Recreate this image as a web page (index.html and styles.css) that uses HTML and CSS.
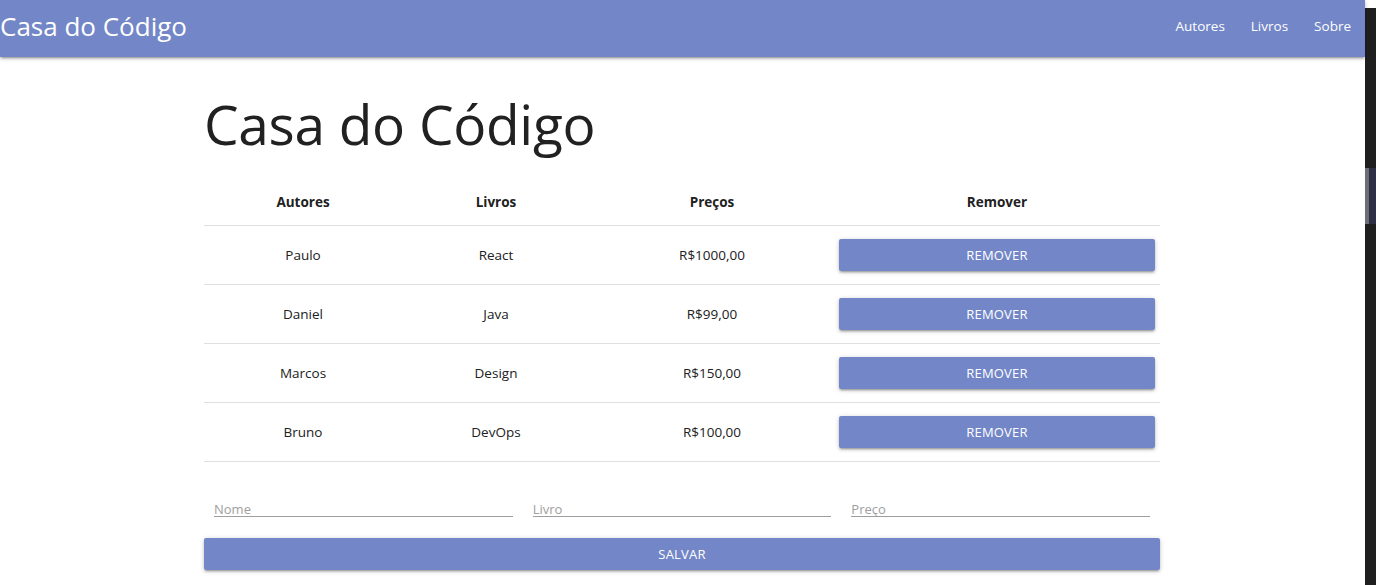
FILE: index.html
```html
<!DOCTYPE html>
<html lang="pt-BR">
<head>
<meta charset="utf-8">
<title>Casa do Código</title>
<link rel="stylesheet" href="styles.css">
</head>
<body>
<div class="page">
  <nav class="navbar">
    <a class="brand" href="#">Casa do Código</a>
    <ul class="menu">
      <li><a href="#">Autores</a></li>
      <li><a href="#">Livros</a></li>
      <li><a href="#">Sobre</a></li>
    </ul>
  </nav>
  <main class="container">
    <h1 class="title">Casa do Código</h1>
    <table class="books">
      <thead>
        <tr>
          <th class="c1">Autores</th>
          <th class="c2">Livros</th>
          <th class="c3">Preços</th>
          <th class="c4">Remover</th>
        </tr>
      </thead>
      <tbody>
        <tr><td>Paulo</td><td>React</td><td>R$1000,00</td><td><button class="btn">Remover</button></td></tr>
        <tr><td>Daniel</td><td>Java</td><td>R$99,00</td><td><button class="btn">Remover</button></td></tr>
        <tr><td>Marcos</td><td>Design</td><td>R$150,00</td><td><button class="btn">Remover</button></td></tr>
        <tr><td>Bruno</td><td>DevOps</td><td>R$100,00</td><td><button class="btn">Remover</button></td></tr>
      </tbody>
    </table>
    <form class="form">
      <div class="fields">
        <div class="field"><input type="text" placeholder="Nome"></div>
        <div class="field"><input type="text" placeholder="Livro"></div>
        <div class="field"><input type="text" placeholder="Preço"></div>
      </div>
      <button type="button" class="btn btn-block">Salvar</button>
    </form>
  </main>
</div>
<div class="scrollbar">
  <div class="sb-top"></div>
  <div class="sb-track">
    <div class="sb-thumb"><span class="sb-edge"></span><span class="sb-fill"></span></div>
  </div>
</div>
</body>
</html>
```
FILE: styles.css
```css
* { box-sizing: border-box; }
html, body { margin: 0; padding: 0; height: 585px; overflow: hidden; }
body {
  display: flex;
  font-family: "Open Sans", "Noto Sans", sans-serif;
  color: rgba(0,0,0,0.87);
  background: #fff;
}
.page { flex: 1; min-width: 0; }

.navbar {
  height: 57px;
  background: #7386c7;
  display: flex;
  align-items: flex-start;
  justify-content: space-between;
  box-shadow: 0 2px 2px 0 rgba(0,0,0,.14), 0 3px 1px -2px rgba(0,0,0,.12), 0 1px 5px 0 rgba(0,0,0,.2);
  position: relative;
  z-index: 1;
}
.brand {
  color: #fff;
  text-decoration: none;
  font-size: 26px;
  line-height: 52px;
}
.menu { list-style: none; margin: 0; padding: 0 1px 0 0; display: flex; }
.menu a {
  display: block;
  color: #fff;
  text-decoration: none;
  font-size: 13.5px;
  padding: 0 13px;
  line-height: 53px;
}

.container { width: 956px; margin: 0 0 0 204px; }
.title {
  font-weight: 400;
  font-size: 55px;
  line-height: 64px;
  margin: 35px 0 23px 0;
  color: #212121;
  letter-spacing: -0.3px;
}

.books { width: 956px; border-collapse: collapse; table-layout: fixed; font-size: 13.5px; }
.books .c1 { width: 198px; }
.books .c2 { width: 188px; }
.books .c3 { width: 244px; }
.books .c4 { width: 326px; }
.books th {
  font-weight: 700;
  padding: 15px 5px;
  line-height: 16px;
  border-bottom: 1px solid #e0e0e0;
  color: #212121;
}
.books td {
  text-align: center;
  padding: 13px 5px;
  line-height: 32px;
  border-bottom: 1px solid #e0e0e0;
  color: #212121;
}
.btn {
  display: block;
  width: 100%;
  height: 32px;
  border: 0;
  border-radius: 2px;
  background: #7386c7;
  color: #fff;
  font-family: inherit;
  font-size: 13px;
  text-transform: uppercase;
  letter-spacing: 0.2px;
  box-shadow: 0 2px 2px 0 rgba(0,0,0,.14), 0 3px 1px -2px rgba(0,0,0,.12), 0 1px 5px 0 rgba(0,0,0,.2);
  cursor: pointer;
}

.form { margin-top: 34px; }
.fields { display: flex; }
.field { flex: 1; padding: 0 10px; }
.field input {
  width: 100%;
  height: 21px;
  border: 0;
  border-bottom: 1px solid #9e9e9e;
  outline: none;
  padding: 0;
  font-family: inherit;
  font-size: 13px;
  line-height: 14px;
  padding-top: 6px;
  background: transparent;
}
.field input::placeholder { color: #9e9e9e; }
.btn-block { margin-top: 19px; }

.scrollbar { width: 11px; display: flex; flex-direction: column; background: #1f1f1f; }
.sb-top { height: 8px; background: #fff; }
.sb-track { flex: 1; padding-top: 160px; }
.sb-thumb { height: 56px; display: flex; }
.sb-edge { width: 4px; background: #6d6d78; }
.sb-fill { flex: 1; background: #2e2e44; }
```
